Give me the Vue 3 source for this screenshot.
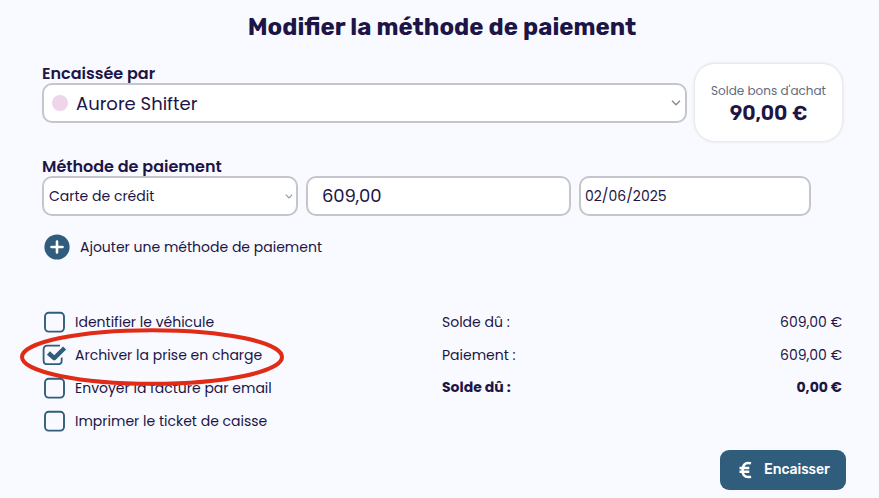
<script setup>
import { ref } from 'vue';

const options = ref([
  { id: 'vehicle', label: 'Identifier le véhicule', checked: false },
  { id: 'archive', label: 'Archiver la prise en charge', checked: true },
  { id: 'email', label: 'Envoyer la facture par email', checked: false },
  { id: 'ticket', label: 'Imprimer le ticket de caisse', checked: false }
]);

const totals = [
  { id: 'due', label: 'Solde dû :', amount: '609,00 €' },
  { id: 'paid', label: 'Paiement :', amount: '609,00 €' },
  { id: 'balance', label: 'Solde dû :', amount: '0,00 €', strong: true }
];

const toggle = (option) => {
  option.checked = !option.checked;
};
</script>

<template>
  <div class="payment">
    <h1 class="title">Modifier la méthode de paiement</h1>

    <div class="cashier-row">
      <div class="cashier">
        <div class="label label-cashier"><span>Encaissée par</span></div>
        <div class="field cashier-select">
          <span class="dot"></span>
          <span class="cashier-name">Aurore Shifter</span>
          <svg class="chevron" width="10" height="6" viewBox="0 0 10 6">
            <path d="M1 0.8 L5 4.8 L9 0.8" fill="none" stroke="#8b8b90" stroke-width="1.4" />
          </svg>
        </div>
      </div>
      <div class="voucher">
        <span class="voucher-label">Solde bons d'achat</span>
        <span class="voucher-amount">90,00 €</span>
      </div>
    </div>

    <div class="label label-method"><span>Méthode de paiement</span></div>
    <div class="method-row">
      <div class="field method-select">
        <span class="method-name">Carte de crédit</span>
        <svg class="chevron" width="8" height="5" viewBox="0 0 8 5">
          <path d="M0.8 0.7 L4 3.9 L7.2 0.7" fill="none" stroke="#97979c" stroke-width="1.1" />
        </svg>
      </div>
      <div class="field amount"><span>609,00</span></div>
      <div class="field date"><span>02/06/2025</span></div>
    </div>

    <div class="add">
      <svg width="26" height="26" viewBox="0 0 26 26">
        <circle cx="13" cy="13" r="12.6" fill="#305d7c" />
        <path d="M13 7.5 V18.5 M7.5 13 H18.5" stroke="#fff" stroke-width="2.6" stroke-linecap="round" />
      </svg>
      <span class="add-label">Ajouter une méthode de paiement</span>
    </div>

    <div class="bottom">
      <div class="options">
        <div v-for="option in options" :key="option.id" class="option" @click="toggle(option)">
          <svg v-if="option.checked" class="box" width="26" height="24" viewBox="0 0 26 24">
            <path
              d="M18 1.7 H5.4 Q1.6 1.7 1.6 5.5 V16.4 Q1.6 20.2 5.4 20.2 H15.9 Q19.7 20.2 19.7 16.4 V13.4"
              fill="none" stroke="#305d7c" stroke-width="1.8"
            />
            <path
              d="M6.4 9 L12.2 14.2 L22.6 4"
              fill="none" stroke="#305d7c" stroke-width="4.4" stroke-linejoin="round"
            />
          </svg>
          <svg v-else class="box" width="26" height="24" viewBox="0 0 26 24">
            <rect x="3" y="1.7" width="19" height="18.9" rx="3.8" fill="none" stroke="#305d7c" stroke-width="1.9" />
          </svg>
          <span class="option-label">{{ option.label }}</span>
        </div>
        <svg class="highlight" width="266" height="60" viewBox="0 0 266 60">
          <ellipse cx="133" cy="30" rx="130" ry="26.8" fill="none" stroke="#e02b17" stroke-width="4" />
        </svg>
      </div>

      <div class="totals">
        <div v-for="line in totals" :key="line.id" :class="['total', { strong: line.strong }]">
          <span class="total-label">{{ line.label }}</span>
          <span class="total-amount">{{ line.amount }}</span>
        </div>
      </div>
    </div>

    <button class="submit">
      <svg width="13" height="18" viewBox="0 0 13 18">
        <path
          d="M12 2.4 Q10.6 1.9 9.2 1.9 C5.6 1.9 3.6 4.8 3.6 9 C3.6 13.2 5.6 16.1 9.2 16.1 Q10.6 16.1 12 15.6 M0.5 7.1 H10.3 M0.5 10.8 H10.3"
          fill="none" stroke="#fff" stroke-width="2.5"
        />
      </svg>
      <span>Encaisser</span>
    </button>
  </div>
</template>

<style>
body {
  background: #f9faff;
}
</style>

<style scoped>
.payment {
  box-sizing: border-box;
  width: 879px;
  height: 498px;
  padding: 12px 37px 0 42px;
  overflow: hidden;
  background: #f9faff;
  color: #1c1546;
  font-family: Poppins, Inter, 'Liberation Sans', sans-serif;
  font-size: 14px;
  white-space: nowrap;
}

.title {
  margin: 0;
  height: 30px;
  line-height: 30px;
  text-align: center;
  font-family: Rubik, Inter, sans-serif;
  font-size: 24px;
  font-weight: 700;
}

.cashier-row {
  display: flex;
  gap: 7px;
  margin-top: 21px;
}

.cashier {
  flex: none;
  width: 645px;
}

.label {
  height: 20px;
  line-height: 21px;
  font-size: 16px;
  font-weight: 600;
}

.field {
  box-sizing: border-box;
  display: flex;
  align-items: center;
  height: 40px;
  border: 2px solid #c5c6cd;
  border-radius: 10px;
  background: #fff;
}

.cashier-select {
  padding: 0 4px 0 8px;
}

.dot {
  width: 16px;
  height: 16px;
  margin-right: 8px;
  border-radius: 50%;
  background: #eed5ea;
}

.cashier-name {
  padding-top: 1px;
  font-size: 18px;
}

.chevron {
  margin-left: auto;
}

.voucher {
  box-sizing: border-box;
  display: flex;
  flex: none;
  flex-direction: column;
  align-items: center;
  width: 149px;
  height: 79px;
  padding-top: 18px;
  border: 1px solid #e9eaee;
  border-radius: 21px;
  background: #fff;
  box-shadow: 0 0 3px rgba(0, 0, 0, 0.1);
}

.voucher-label {
  line-height: 18px;
  font-size: 12px;
  color: #5f6b7e;
}

.voucher-amount {
  line-height: 27px;
  font-family: Rubik, Inter, sans-serif;
  font-size: 20px;
  font-weight: 600;
}

.label-method {
  margin-top: 14px;
}

.method-row {
  display: flex;
  gap: 8px;
}

.method-select {
  width: 256px;
  padding: 0 3px 0 5px;
}

.amount {
  width: 265px;
  padding: 0 0 1px 14px;
  font-size: 18px;
  letter-spacing: -0.15px;
}

.date {
  width: 232px;
  padding-left: 4px;
}

.add {
  display: flex;
  align-items: center;
  gap: 10px;
  height: 26px;
  margin: 18px 0 0 2px;
}

.bottom {
  display: flex;
  margin-top: 46px;
}

.options {
  position: relative;
  width: 400px;
}

.option {
  display: flex;
  align-items: center;
  gap: 7px;
  height: 33px;
}

/* hand-drawn ring around the archive option */
.highlight {
  position: absolute;
  top: 21px;
  left: -23px;
}

.totals {
  width: 400px;
}

.total {
  display: flex;
  align-items: center;
  justify-content: space-between;
  height: 33px;
}

.total.strong {
  height: 31px;
  font-weight: 700;
}

.submit {
  display: flex;
  align-items: center;
  gap: 12px;
  width: 126px;
  height: 40px;
  margin: 12px 0 0 678px;
  padding: 0 0 1px 19px;
  border: 0;
  border-radius: 9px;
  background: #305d7c;
  color: #fff;
  font-family: Rubik, Inter, sans-serif;
  font-size: 14px;
  font-weight: 500;
}
</style>
